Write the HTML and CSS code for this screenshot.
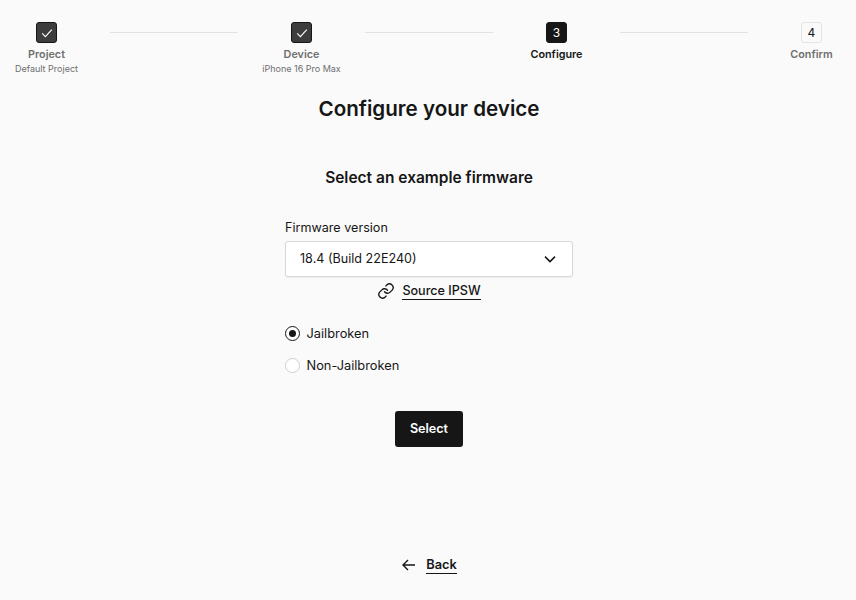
FILE: index.html
```html
<!DOCTYPE html>
<html lang="en">
<head>
    <meta charset="UTF-8">
    <meta name="viewport" content="width=device-width, initial-scale=1.0">
    <title>Configure your device</title>
    <link rel="stylesheet" href="styles.css">
</head>
<body>
    <div class="stepper">
        <div class="step done">
            <div class="step-box">
                <svg width="12" height="12" viewBox="0 0 12 12"><path d="M1.2 6.4 4.4 9.6 10.8 2.6" fill="none" stroke="#fff" stroke-width="1.1"/></svg>
            </div>
            <div class="step-name">Project</div>
            <div class="step-sub">Default Project</div>
        </div>
        <div class="step-line"></div>
        <div class="step done">
            <div class="step-box">
                <svg width="12" height="12" viewBox="0 0 12 12"><path d="M1.2 6.4 4.4 9.6 10.8 2.6" fill="none" stroke="#fff" stroke-width="1.1"/></svg>
            </div>
            <div class="step-name">Device</div>
            <div class="step-sub">iPhone 16 Pro Max</div>
        </div>
        <div class="step-line"></div>
        <div class="step current">
            <div class="step-box">3</div>
            <div class="step-name">Configure</div>
        </div>
        <div class="step-line"></div>
        <div class="step">
            <div class="step-box">4</div>
            <div class="step-name">Confirm</div>
        </div>
    </div>

    <h1>Configure your device</h1>
    <h2>Select an example firmware</h2>

    <div class="form">
        <label class="field-label" for="firmware">Firmware version</label>
        <div class="select" id="firmware">
            <span class="select-value">18.4 (Build 22E240)</span>
            <svg width="14" height="14" viewBox="0 0 14 14"><path d="M2 4.6 7 9.6 12 4.6" fill="none" stroke="#161616" stroke-width="1.5"/></svg>
        </div>
        <div class="source">
            <svg width="18" height="18" viewBox="0 0 24 24" fill="none" stroke="#161616" stroke-width="1.8" stroke-linecap="round" stroke-linejoin="round"><path d="M10 13a5 5 0 0 0 7.5.5l3-3a5 5 0 0 0-7-7l-1.7 1.7"/><path d="M14 11a5 5 0 0 0-7.500-.5l-3 3a5 5 0 0 0 7 7l1.700-1.700"/></svg>
            <a class="link" href="#">Source IPSW</a>
        </div>
        <div class="radios">
            <div class="radio-row">
                <span class="radio checked"></span>
                <span>Jailbroken</span>
            </div>
            <div class="radio-row">
                <span class="radio"></span>
                <span>Non-Jailbroken</span>
            </div>
        </div>
        <button class="select-btn">Select</button>
    </div>

    <div class="back">
        <svg width="16" height="16" viewBox="0 0 16 16" fill="none" stroke="#161616" stroke-width="1.4"><path d="M14 8H2.500M7 3 2 8l5 5"/></svg>
        <a class="link back-link" href="#">Back</a>
    </div>
</body>
</html>
```

FILE: styles.css
```css
* {
    box-sizing: border-box;
}
html {
    overflow: hidden;
}
body {
    margin: 0;
    width: 858px;
    height: 600px;
    overflow: hidden;
    background: #fafafa;
    color: #161616;
    font-family: Inter, "Liberation Sans", sans-serif;
}
.stepper {
    display: flex;
    align-items: flex-start;
    padding-top: 22px;
    height: 87px;
}
.step {
    width: 93px;
    flex-shrink: 0;
    display: flex;
    flex-direction: column;
    align-items: center;
    color: #6f6f6f;
}
.step-box {
    width: 21px;
    height: 21px;
    border: 1px solid #e4e4e4;
    border-radius: 3px;
    display: flex;
    align-items: center;
    justify-content: center;
    font-size: 12px;
    line-height: 1;
    color: #161616;
}
.step.done .step-box {
    background: #3d3d3d;
    border-color: #161616;
}
.step.current .step-box {
    background: #161616;
    border-color: #161616;
    color: #fff;
}
.step-name {
    font-size: 10.8px;
    font-weight: 600;
    line-height: 14px;
    margin-top: 5px;
}
.step.current .step-name {
    color: #161616;
}
.step-sub {
    font-size: 9px;
    line-height: 14px;
    white-space: nowrap;
}
.step-line {
    flex: 1;
    height: 1px;
    margin: 10px 17px 0;
    background: #e2e2e2;
}
h1 {
    margin: 0;
    text-align: center;
    font-size: 20.6px;
    font-weight: 600;
    line-height: 44px;
}
h2 {
    margin: 35px 0 0;
    text-align: center;
    font-size: 15.5px;
    font-weight: 600;
    line-height: 24px;
}
.form {
    width: 288px;
    margin: 28px auto 0;
    display: flex;
    flex-direction: column;
    font-size: 12.8px;
}
.field-label {
    font-size: 12.6px;
    line-height: 20px;
    margin-bottom: 3px;
}
.select {
    height: 36px;
    padding: 0 15px 0 14px;
    display: flex;
    align-items: center;
    justify-content: space-between;
    font-size: 12.6px;
    background: #fff;
    border: 1px solid #d8d8d8;
    border-radius: 3px;
    box-shadow: 0 1px 2px rgba(0,0,0,0.06);
}
.select-value {
    margin-bottom: 2px;
}
.source {
    display: flex;
    align-items: center;
    justify-content: center;
    gap: 7px;
    margin-top: 5px;
    height: 18px;
}
.link {
    color: #161616;
    font-size: 12.6px;
    font-weight: 500;
    text-decoration: none;
    border-bottom: 1px solid #161616;
    line-height: 16px;
}
.back-link {
    font-size: 12.8px;
    font-weight: 600;
}
.radios {
    margin-top: 23px;
    display: flex;
    flex-direction: column;
    gap: 12px;
}
.radio-row {
    display: flex;
    align-items: center;
    gap: 6.5px;
    height: 20px;
}
.radio {
    width: 15px;
    height: 15px;
    margin-top: 1px;
    border: 1px solid #cfcfcf;
    border-radius: 50%;
    background: #fff;
    display: flex;
    align-items: center;
    justify-content: center;
}
.radio.checked {
    border: 1.5px solid #161616;
}
.radio.checked::after {
    content: "";
    width: 7px;
    height: 7px;
    border-radius: 50%;
    background: #161616;
}
.select-btn {
    align-self: center;
    margin-top: 36px;
    width: 68px;
    height: 36px;
    padding: 0 0 2px;
    border: none;
    border-radius: 3px;
    background: #161616;
    color: #fff;
    font-family: inherit;
    font-size: 12.6px;
    font-weight: 600;
}
.back {
    margin-top: 109px;
    display: flex;
    align-items: center;
    justify-content: center;
    gap: 9px;
    height: 18px;
}
```
